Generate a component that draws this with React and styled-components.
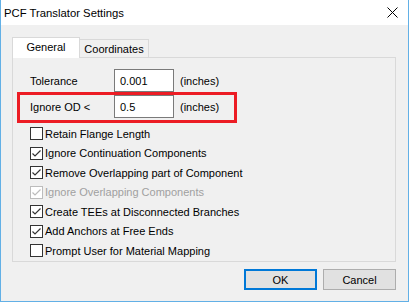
import React from 'react';
import styled, { createGlobalStyle } from 'styled-components';

const GlobalStyle = createGlobalStyle`
  body {
    margin: 0;
    background: #ffffff;
    font-family: "Liberation Sans", Arial, sans-serif;
    font-size: 11px;
    color: #000;
  }
`;

const Window = styled.div`
  width: 409px;
  height: 302px;
  box-sizing: border-box;
  border: 1px solid #62b0e6;
  border-top: none;
  background: #f0f0f0;
  display: flex;
  flex-direction: column;
`;

const TitleBar = styled.div`
  height: 25px;
  background: #ffffff;
  display: flex;
  align-items: center;
  justify-content: space-between;
  padding: 0 10px 0 3px;
  font-size: 11.3px;
`;

const Body = styled.div`
  display: flex;
  flex-direction: column;
  padding: 12px 12px 0 11px;
`;

const TabRow = styled.div`
  display: flex;
  align-items: flex-end;
  height: 20px;
`;

const Tab = styled.div`
  box-sizing: border-box;
  display: flex;
  align-items: center;
  justify-content: center;
  border: 1px solid #d9d9d9;
  border-bottom: none;
  position: relative;
  width: ${p => (p.$active ? '68px' : '69px')};
  height: ${p => (p.$active ? '21px' : '18px')};
  margin-bottom: ${p => (p.$active ? '-1px' : '0')};
  background: ${p => (p.$active ? '#ffffff' : '#f0f0f0')};
  border-left: ${p => (p.$active ? '1px solid #d9d9d9' : 'none')};
  z-index: ${p => (p.$active ? 1 : 0)};
  padding-bottom: ${p => (p.$active ? '2px' : '0')};
`;

const Panel = styled.div`
  box-sizing: border-box;
  height: 205px;
  border: 1px solid #d9d9d9;
  background: #f0f0f0;
  padding: 11px 0 0 17px;
  display: flex;
  flex-direction: column;
`;

const Fields = styled.div`
  display: flex;
  flex-direction: column;
  gap: 3px;
`;

const FieldRow = styled.div`
  display: flex;
  align-items: center;
  height: 23px;
  position: relative;

  ${p => p.$highlight && `
    &::after {
      content: '';
      position: absolute;
      left: -13px;
      top: -3px;
      width: 220px;
      height: 31px;
      box-sizing: border-box;
      border: 3px solid #ec1c24;
      pointer-events: none;
    }
  `}
`;

const FieldLabel = styled.span`
  width: 84px;
`;

const TextBox = styled.div`
  box-sizing: border-box;
  width: 60px;
  height: 23px;
  border: 1px solid #7a7a7a;
  background: #ffffff;
  padding-left: 5px;
  display: flex;
  align-items: center;
`;

const Unit = styled.span`
  margin-left: 6px;
`;

const CheckList = styled.div`
  margin-top: 6px;
  display: flex;
  flex-direction: column;
`;

const CheckRow = styled.div`
  display: flex;
  align-items: center;
  height: 19.5px;
  gap: 2px;
  color: ${p => (p.$disabled ? '#a0a0a0' : '#000')};
`;

const Box = styled.span`
  box-sizing: border-box;
  width: 13px;
  height: 13px;
  border: 1px solid ${p => (p.$disabled ? '#bcbcbc' : '#333333')};
  background: #ffffff;
  display: flex;
  align-items: center;
  justify-content: center;
`;

const ButtonBar = styled.div`
  display: flex;
  justify-content: flex-end;
  gap: 6px;
  margin-top: 7px;
`;

const Button = styled.button`
  box-sizing: border-box;
  width: 73px;
  height: 21px;
  font-family: inherit;
  font-size: 11px;
  color: #000;
  background: #e1e1e1;
  border: ${p => (p.$default ? '2px solid #0078d7' : '1px solid #adadad')};
  padding: 0;
`;

const Check = ({ checked, disabled }) => (
  <Box $disabled={disabled}>
    {checked && (
      <svg width="11" height="11" viewBox="0 0 11 11">
        <path d="M1.5 5.5 L4 8 L9.5 2.5" fill="none" stroke={disabled ? '#bcbcbc' : '#333333'} strokeWidth="1.2" />
      </svg>
    )}
  </Box>
);

const options = [
  { label: 'Retain Flange Length', checked: false },
  { label: 'Ignore Continuation Components', checked: true },
  { label: 'Remove Overlapping part of Component', checked: true },
  { label: 'Ignore Overlapping Components', checked: true, disabled: true },
  { label: 'Create TEEs at Disconnected Branches', checked: true },
  { label: 'Add Anchors at Free Ends', checked: true },
  { label: 'Prompt User for Material Mapping', checked: false },
];

export default function App() {
  return (
    <>
      <GlobalStyle />
      <Window>
        <TitleBar>
          <span>PCF Translator Settings</span>
          <svg width="11" height="11" viewBox="0 0 11 11">
            <path d="M0.5 0.5 L10.5 10.5 M10.5 0.5 L0.5 10.5" stroke="#000" strokeWidth="1" />
          </svg>
        </TitleBar>
        <Body>
          <TabRow>
            <Tab $active>General</Tab>
            <Tab>Coordinates</Tab>
          </TabRow>
          <Panel>
            <Fields>
              <FieldRow>
                <FieldLabel>Tolerance</FieldLabel>
                <TextBox>0.001</TextBox>
                <Unit>(inches)</Unit>
              </FieldRow>
              <FieldRow $highlight>
                <FieldLabel>Ignore OD &lt;</FieldLabel>
                <TextBox>0.5</TextBox>
                <Unit>(inches)</Unit>
              </FieldRow>
            </Fields>
            <CheckList>
              {options.map(o => (
                <CheckRow key={o.label} $disabled={o.disabled}>
                  <Check checked={o.checked} disabled={o.disabled} />
                  <span>{o.label}</span>
                </CheckRow>
              ))}
            </CheckList>
          </Panel>
          <ButtonBar>
            <Button $default>OK</Button>
            <Button>Cancel</Button>
          </ButtonBar>
        </Body>
      </Window>
    </>
  );
}
